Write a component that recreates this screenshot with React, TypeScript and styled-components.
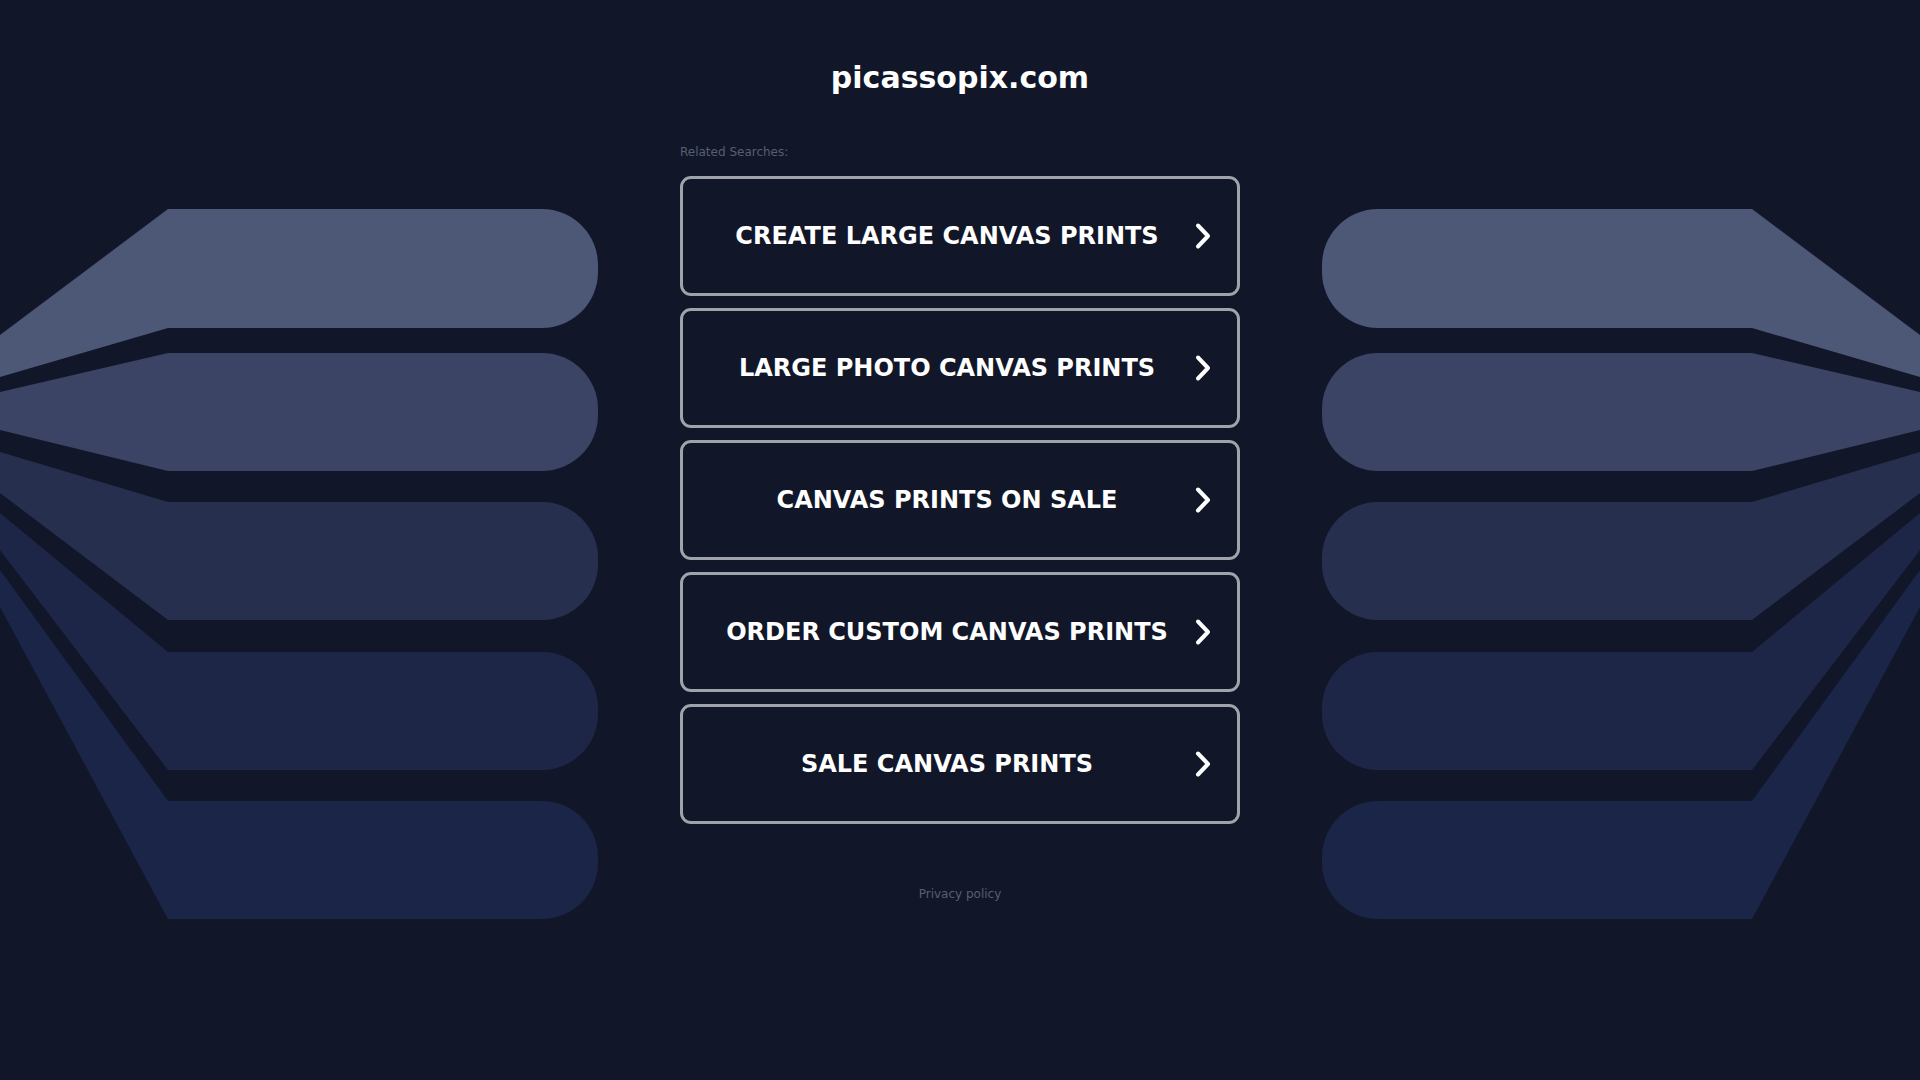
import React from 'react';
import styled, {createGlobalStyle} from 'styled-components';

const GlobalStyle = createGlobalStyle`
  html, body {
    margin: 0;
    padding: 0;
    background: #111729;
  }
  body {
    font-family: 'DejaVu Sans', 'Liberation Sans', sans-serif;
    color: #fff;
  }
`;

const searches = [
  'Create Large Canvas Prints',
  'Large Photo Canvas Prints',
  'Canvas Prints on Sale',
  'Order Custom Canvas Prints',
  'Sale Canvas Prints',
];

// each band of the fan: flat top/bottom where the pill is straight, and where it meets the screen edge
const bands = [
  {edgeTop: 335, edgeBottom: 377, top: 209, bottom: 328, fill: '#4d5776'},
  {edgeTop: 392, edgeBottom: 430, top: 353, bottom: 471, fill: '#3b4464'},
  {edgeTop: 452, edgeBottom: 493, top: 502, bottom: 620, fill: '#272f4f'},
  {edgeTop: 513, edgeBottom: 550, top: 652, bottom: 770, fill: '#1e2648'},
  {edgeTop: 570, edgeBottom: 607, top: 801, bottom: 919, fill: '#1b2548'},
];

const bandPath = (b: (typeof bands)[number]) => {
  const r = 56;
  const end = 598;
  return [
    `M0 ${b.edgeTop}`,
    `L168 ${b.top}`,
    `L${end - r} ${b.top}`,
    `A${r} ${r} 0 0 1 ${end} ${b.top + r}`,
    `L${end} ${b.bottom - r}`,
    `A${r} ${r} 0 0 1 ${end - r} ${b.bottom}`,
    `L168 ${b.bottom}`,
    `L0 ${b.edgeBottom}`,
    'Z',
  ].join(' ');
};

const Page = styled.div`
  display: flex;
  min-height: 100vh;
  overflow: hidden;
`;

const Side = styled.div<{$flip?: boolean}>`
  flex: 1;
  display: flex;
  justify-content: ${p => (p.$flip ? 'flex-end' : 'flex-start')};
  align-items: flex-start;

  svg {
    display: block;
    transform: ${p => (p.$flip ? 'scaleX(-1)' : 'none')};
  }
`;

const Main = styled.main`
  flex: none;
  width: 560px;
  display: flex;
  flex-direction: column;
  padding-top: 60px;
`;

const Title = styled.h1`
  margin: 0;
  font-size: 30px;
  line-height: 36px;
  font-weight: bold;
  text-align: center;
  color: #fff;
`;

const Caption = styled.div`
  margin-top: 48px;
  margin-bottom: 16px;
  font-size: 12px;
  line-height: 16px;
  color: #575e71;
`;

const List = styled.div`
  display: flex;
  flex-direction: column;
  gap: 12px;
`;

const SearchButton = styled.a`
  box-sizing: border-box;
  height: 120px;
  display: flex;
  align-items: center;
  gap: 4px;
  padding: 0 24px 0 22px;
  border: 3px solid #a0a3a9;
  border-radius: 11px;
  color: #fff;
  text-decoration: none;
  cursor: pointer;
`;

const Label = styled.span`
  flex: 1;
  text-align: center;
  font-size: 24px;
  font-weight: bold;
  text-transform: uppercase;
  white-space: nowrap;
`;

const Footer = styled.a`
  margin-top: 62px;
  font-size: 12px;
  line-height: 16px;
  text-align: center;
  color: #575e71;
  text-decoration: none;
`;

const Chevron = () => (
  <svg width="20" height="28" viewBox="0 0 20 28" fill="none">
    <path
      d="M5 3.5 L15 14 L5 24.5"
      stroke="#fff"
      strokeWidth="4"
      strokeLinecap="round"
      strokeLinejoin="round"
    />
  </svg>
);

const Fan = () => (
  <svg width="598" height="920" viewBox="0 0 598 920">
    {bands.map(b => (
      <path key={b.top} d={bandPath(b)} fill={b.fill} />
    ))}
  </svg>
);

export default function App() {
  return (
    <>
      <GlobalStyle />
      <Page>
        <Side>
          <Fan />
        </Side>
        <Main>
          <Title>picassopix.com</Title>
          <Caption>Related Searches:</Caption>
          <List>
            {searches.map(s => (
              <SearchButton key={s}>
                <Label>{s}</Label>
                <Chevron />
              </SearchButton>
            ))}
          </List>
          <Footer>Privacy policy</Footer>
        </Main>
        <Side $flip>
          <Fan />
        </Side>
      </Page>
    </>
  );
}
